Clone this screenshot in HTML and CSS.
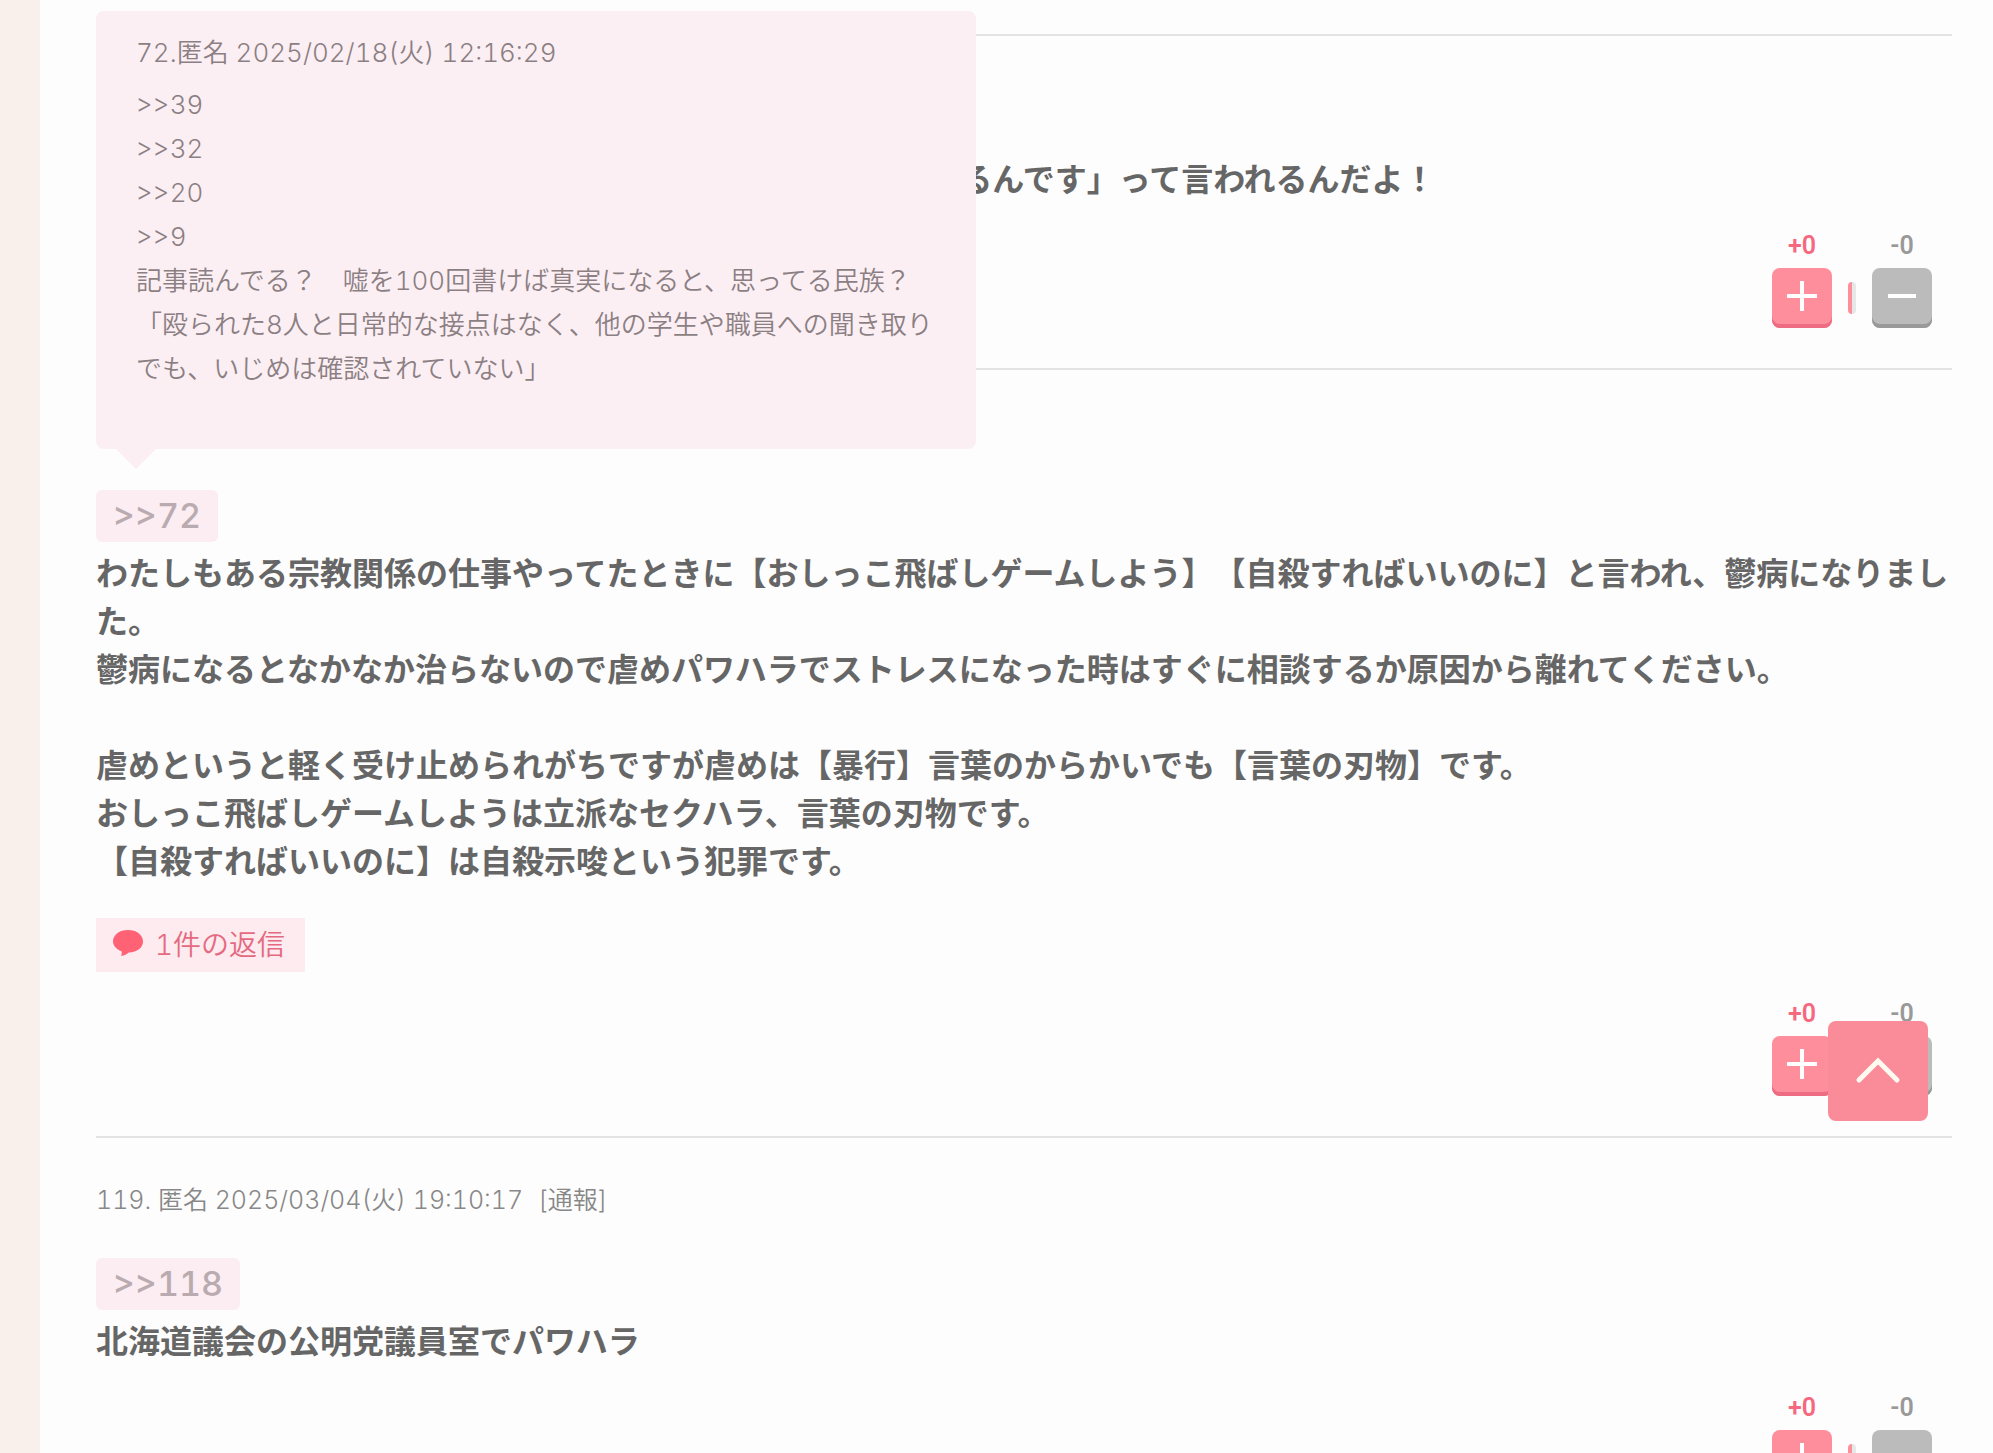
FILE: index.html
```html
<!DOCTYPE html>
<html lang="ja">
<head>
    <meta charset="UTF-8">
    <meta name="viewport" content="width=device-width, initial-scale=1.0">
    <title>コメント一覧</title>
    <link rel="stylesheet" href="styles.css">
</head>
<body>
    <main class="comments">
        <article class="comment">
            <div class="comment-head"></div>
            <p class="comment-body">上司に相談しても「M さんにも事情が色々とあって困っているんです」って言われるんだよ！</p>
            <div class="votes">
                <div class="vote plus">
                    <span class="count">+0</span>
                    <button class="vote-btn" aria-label="プラス">
                        <svg viewBox="0 0 60 60"><path d="M15 28h30M30 13v30"/></svg>
                    </button>
                </div>
                <div class="bar"></div>
                <div class="vote minus">
                    <span class="count">-0</span>
                    <button class="vote-btn" aria-label="マイナス">
                        <svg viewBox="0 0 60 60"><path d="M16 28h28"/></svg>
                    </button>
                </div>
            </div>
        </article>

        <article class="comment">
            <div class="comment-head"></div>
            <div class="anchor">
                <a href="#c72" class="res-anchor">&gt;&gt;72</a>
                <div class="popup">
                    <div class="popup-head">72.匿名 2025/02/18(火) 12:16:29</div>
                    <p>&gt;&gt;39<br>&gt;&gt;32<br>&gt;&gt;20<br>&gt;&gt;9<br>記事読んでる？　嘘を100回書けば真実になると、思ってる民族？<br>「殴られた8人と日常的な接点はなく、他の学生や職員への聞き取りでも、いじめは確認されていない」</p>
                </div>
            </div>
            <p class="comment-body">わたしもある宗教関係の仕事やってたときに【おしっこ飛ばしゲームしよう】【自殺すればいいのに】と言われ、鬱病になりました。<br>鬱病になるとなかなか治らないので虐めパワハラでストレスになった時はすぐに相談するか原因から離れてください。<br><br>虐めというと軽く受け止められがちですが虐めは【暴行】言葉のからかいでも【言葉の刃物】です。<br>おしっこ飛ばしゲームしようは立派なセクハラ、言葉の刃物です。<br>【自殺すればいいのに】は自殺示唆という犯罪です。</p>
            <a href="#replies" class="replies">
                <svg viewBox="0 0 30 26"><path d="M15 0C6.500 0 0 4.800 0 11.500c0 4.300 3.500 7.900 8.500 9.800.5 1.700.4 3.200-.5 4.700 3.200-.5 5.800-1.700 7.800-3.400C24 22.300 30 17.800 30 11.500 30 4.800 23.500 0 15 0z"/></svg>
                <span>1件の返信</span>
            </a>
            <div class="votes">
                <div class="vote plus">
                    <span class="count">+0</span>
                    <button class="vote-btn" aria-label="プラス">
                        <svg viewBox="0 0 60 60"><path d="M15 28h30M30 13v30"/></svg>
                    </button>
                </div>
                <div class="bar"></div>
                <div class="vote minus">
                    <span class="count">-0</span>
                    <button class="vote-btn" aria-label="マイナス">
                        <svg viewBox="0 0 60 60"><path d="M16 28h28"/></svg>
                    </button>
                </div>
            </div>
        </article>

        <article class="comment">
            <div class="comment-head">119. 匿名 2025/03/04(火) 19:10:17 <a href="#report" class="report">[通報]</a></div>
            <div class="anchor">
                <a href="#c118" class="res-anchor">&gt;&gt;118</a>
            </div>
            <p class="comment-body">北海道議会の公明党議員室でパワハラ</p>
            <div class="votes">
                <div class="vote plus">
                    <span class="count">+0</span>
                    <button class="vote-btn" aria-label="プラス">
                        <svg viewBox="0 0 60 60"><path d="M15 28h30M30 13v30"/></svg>
                    </button>
                </div>
                <div class="bar"></div>
                <div class="vote minus">
                    <span class="count">-0</span>
                    <button class="vote-btn" aria-label="マイナス">
                        <svg viewBox="0 0 60 60"><path d="M16 28h28"/></svg>
                    </button>
                </div>
            </div>
        </article>
    </main>

    <button class="to-top" aria-label="ページの先頭へ">
        <svg viewBox="0 0 100 100"><path d="M31 59l19-19 19 19"/></svg>
    </button>
</body>
</html>
```
FILE: styles.css
```css
* {
    margin: 0;
    padding: 0;
    box-sizing: border-box;
}

html {
    overflow: hidden;
}

body {
    height: 100vh;
    overflow: hidden;
    background: #faf0eb;
    padding-left: 40px;
    font-family: Inter, "Noto Sans CJK JP", sans-serif;
    font-variant-numeric: tabular-nums;
    text-spacing-trim: space-all;
    color: #666;
}

a {
    text-decoration: none;
}

.comments {
    min-height: 100vh;
    padding: 34px 41px 0 56px;
    background: #fdfdfd;
}

.comment {
    padding: 40px 0;
    border-top: 2px solid #e3e3e3;
}

.comment-head {
    min-height: 44px;
    margin-bottom: 36px;
    font-size: 25px;
    font-weight: 350;
    line-height: 44px;
    color: #888;
}

.report {
    margin-left: 8px;
    color: #888;
}

.comment-body {
    font-size: 32px;
    font-weight: 600;
    line-height: 48px;
    color: #666;
}

/* anchor to another comment, with its preview */
.anchor {
    position: relative;
    display: flex;
    margin-bottom: 8px;
}

.res-anchor {
    padding: 0 17px;
    border-radius: 6px;
    background: #fcedf2;
    font-size: 34px;
    font-weight: 500;
    line-height: 52px;
    color: #b9abaf;
}

.popup {
    position: absolute;
    left: 0;
    bottom: 93px;
    width: 880px;
    padding: 20px 40px 58px;
    border-radius: 8px;
    background: #fbeff3;
    font-size: 26px;
    font-weight: 350;
    line-height: 44px;
    color: #8c7f83;
}

.popup::after {
    content: "";
    position: absolute;
    top: 100%;
    left: 20px;
    border: 20px solid transparent;
    border-top-color: #fbeff3;
    border-bottom: 0;
}

.popup-head {
    margin-bottom: 8px;
}

.replies {
    display: flex;
    align-items: center;
    gap: 12px;
    width: fit-content;
    margin-top: 32px;
    padding: 0 20px 0 17px;
    background: #fdebf0;
    font-size: 28px;
    font-weight: 350;
    line-height: 54px;
    color: #e5697f;
}

.replies svg {
    width: 30px;
    height: 26px;
    margin-bottom: 4px;
    fill: #ff6275;
}

.votes {
    display: flex;
    justify-content: flex-end;
    align-items: flex-end;
    gap: 16px;
    margin-top: 30px;
    padding-right: 20px;
}

.vote {
    display: flex;
    flex-direction: column;
    gap: 10px;
    width: 60px;
    text-align: center;
}

.count {
    font-family: Roboto, sans-serif;
    font-size: 25px;
    font-weight: 600;
    line-height: 24px;
}

.vote-btn {
    width: 60px;
    height: 60px;
    border: none;
    border-radius: 8px;
    cursor: pointer;
}

.vote-btn svg {
    display: block;
    fill: none;
    stroke: #fff;
    stroke-width: 4;
}

.plus .count { color: #f5687f; }
.plus .vote-btn {
    background: #ff8e9d;
    box-shadow: inset 0 -4px #ee6c83;
}

.minus .count { color: #999; }
.minus .vote-btn {
    background: #bbb;
    box-shadow: inset 0 -4px #999;
}

.bar {
    width: 8px;
    height: 32px;
    margin-bottom: 14px;
    border-left: 4px solid #ff8e9d;
    border-right: 4px solid #e6e8e8;
    border-radius: 4px;
}

.to-top {
    position: fixed;
    right: 65px;
    bottom: 332px;
    width: 100px;
    height: 100px;
    border: none;
    border-radius: 8px;
    background: #fa8b99;
    cursor: pointer;
}

.to-top svg {
    display: block;
    fill: none;
    stroke: #fffbf0;
    stroke-width: 5;
    stroke-linecap: round;
}
```
